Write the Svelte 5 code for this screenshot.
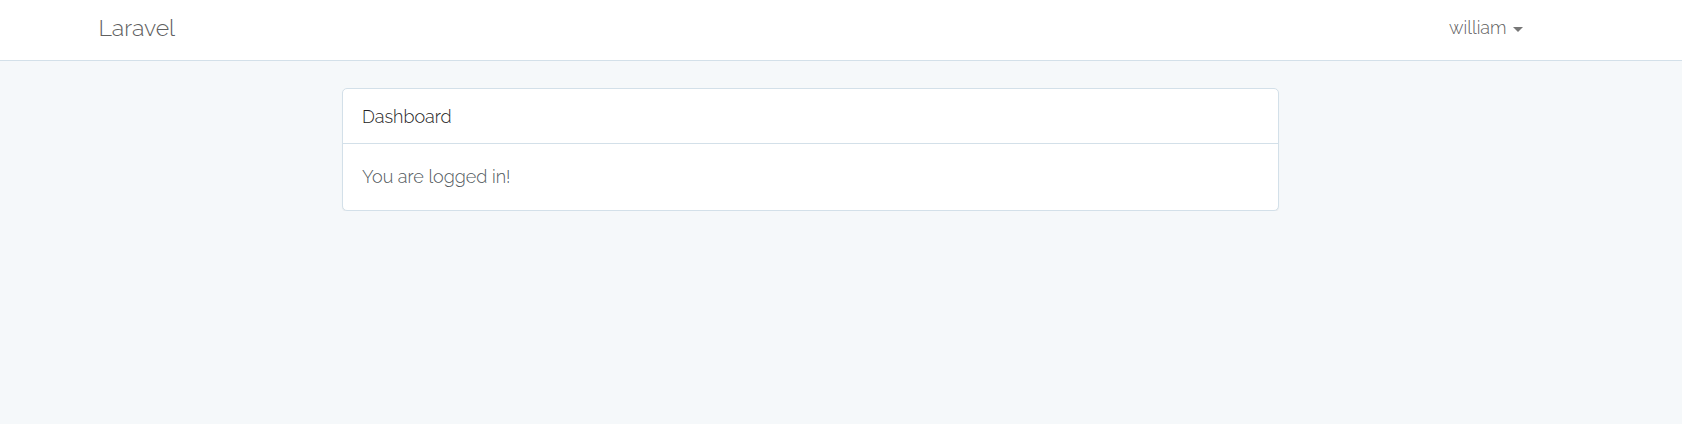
<script>
  const user = 'william';
</script>

<nav class="navbar">
  <div class="bar">
    <a class="brand" href="#home">Laravel</a>
    <button class="user" type="button" aria-haspopup="true">
      {user}
      <svg class="caret" viewBox="0 0 10 5" aria-hidden="true"><path d="M0 0h10L5 5z" /></svg>
    </button>
  </div>
</nav>

<main>
  <section class="panel">
    <header class="heading">Dashboard</header>
    <div class="body">You are logged in!</div>
  </section>
</main>

<style>
  :global(body) {
    background: #f5f8fa;
    color: #50585c;
    font-family: Raleway, Lato, sans-serif;
    font-size: 18px;
    font-weight: 300;
    line-height: 28px;
  }

  .navbar {
    background: #fff;
    border-bottom: 1px solid #d3e0e9;
    margin-bottom: 27px;
    padding-right: 61px;
  }

  .bar {
    box-sizing: border-box;
    display: flex;
    align-items: center;
    justify-content: space-between;
    max-width: 1462px;
    margin: 0 auto;
    padding: 14px 19px 18px;
  }

  .brand {
    color: #606060;
    font-size: 23px;
    text-decoration: none;
  }

  .user {
    display: flex;
    align-items: center;
    gap: 6px;
    padding: 0;
    border: 0;
    background: none;
    color: #606060;
    font: inherit;
    cursor: pointer;
  }

  .caret {
    width: 10px;
    height: 5px;
    margin-top: 2px;
    fill: #777;
  }

  main {
    padding-right: 61px;
  }

  .panel {
    box-sizing: border-box;
    width: calc(100% - 32px);
    max-width: 937px;
    margin: 0 auto;
    background: #fff;
    border: 1px solid #d3e0e9;
    border-radius: 5px;
    box-shadow: 0 1px 1px rgba(0, 0, 0, 0.06);
  }

  .heading {
    padding: 14px 19px 12px;
    border-bottom: 1px solid #d3e0e9;
    color: #222;
  }

  .body {
    padding: 19px;
  }
</style>
